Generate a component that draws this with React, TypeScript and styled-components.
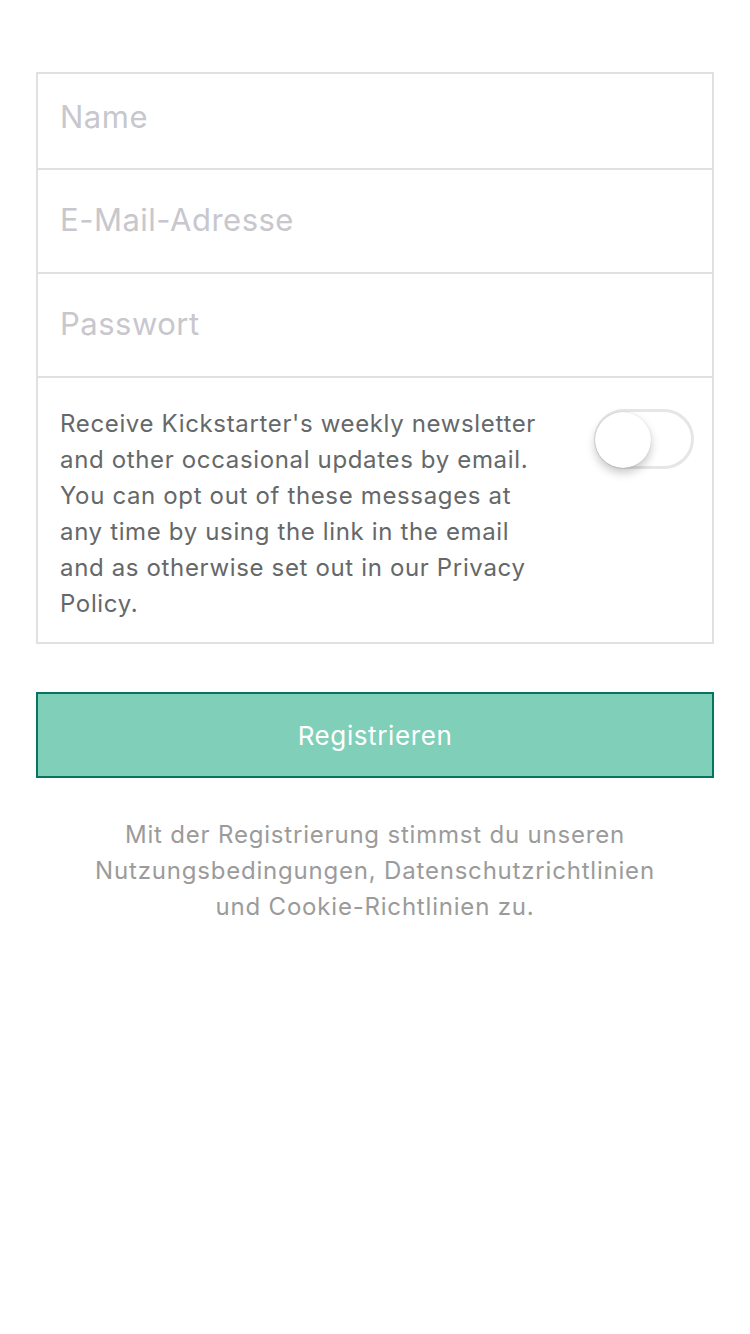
import React from "react";
import styled, { createGlobalStyle } from "styled-components";

const Global = createGlobalStyle`
  html, body { margin: 0; padding: 0; background: #fff; }
  body { font-family: Inter, "Open Sans", "Liberation Sans", sans-serif; -webkit-font-smoothing: antialiased; }
  * { box-sizing: border-box; }
`;

const Page = styled.div`
  width: 750px;
  min-height: 1334px;
  padding: 72px 36px 0;
  display: flex;
  flex-direction: column;
`;

const Card = styled.div`
  border: 2px solid #e0e0e2;
  display: flex;
  flex-direction: column;
`;

const FieldRow = styled.div<{ $h: number; $lift: number }>`
  height: ${(p) => p.$h}px;
  display: flex;
  align-items: center;
  padding: 0 22px ${(p) => p.$lift}px;
  border-bottom: 2px solid #e0e0e2;
`;

const Placeholder = styled.span`
  font-size: 31px;
  color: #c7c7cd;
  letter-spacing: 0.5px;
`;

const NewsRow = styled.div`
  display: flex;
  align-items: flex-start;
  justify-content: space-between;
  padding: 28px 18px 20px 22px;
`;

const NewsText = styled.p`
  margin: 0;
  width: 484px;
  font-size: 24px;
  line-height: 36px;
  letter-spacing: 0.65px;
  color: #656869;
`;

const Track = styled.div`
  margin-top: 3px;
  width: 100px;
  height: 60px;
  border-radius: 30px;
  border: 3px solid #e6e6e6;
  background: #fff;
  position: relative;
  flex-shrink: 0;
`;

const Knob = styled.div`
  position: absolute;
  left: -2px;
  top: 0px;
  width: 56px;
  height: 56px;
  border-radius: 50%;
  background: #fff;
  box-shadow: 0 5px 10px rgba(0, 0, 0, 0.22), 0 0 1px rgba(0, 0, 0, 0.2);
`;

const Button = styled.button`
  margin-top: 48px;
  height: 86px;
  width: 100%;
  background: #80cfb8;
  border: 2px solid #077361;
  color: #fff;
  font-family: inherit;
  font-size: 26px;
  letter-spacing: 0.6px;
  padding: 0;
`;

const Legal = styled.p`
  margin: 39px 0 0;
  text-align: center;
  font-size: 24px;
  line-height: 36px;
  letter-spacing: 0.8px;
  color: #9b9b9b;
`;

export default function App() {
  return (
    <>
      <Global />
      <Page>
        <Card>
          <FieldRow $h={96} $lift={10}>
            <Placeholder>Name</Placeholder>
          </FieldRow>
          <FieldRow $h={104} $lift={4}>
            <Placeholder>E-Mail-Adresse</Placeholder>
          </FieldRow>
          <FieldRow $h={104} $lift={4}>
            <Placeholder>Passwort</Placeholder>
          </FieldRow>
          <NewsRow>
            <NewsText>
              Receive Kickstarter's weekly newsletter and other occasional updates by email. You can opt out of these messages at any time by using the link in the email and as otherwise set out in our Privacy Policy.
            </NewsText>
            <Track>
              <Knob />
            </Track>
          </NewsRow>
        </Card>
        <Button>Registrieren</Button>
        <Legal>
          Mit der Registrierung stimmst du unseren
          <br />
          Nutzungsbedingungen, Datenschutzrichtlinien
          <br />
          und Cookie-Richtlinien zu.
        </Legal>
      </Page>
    </>
  );
}
